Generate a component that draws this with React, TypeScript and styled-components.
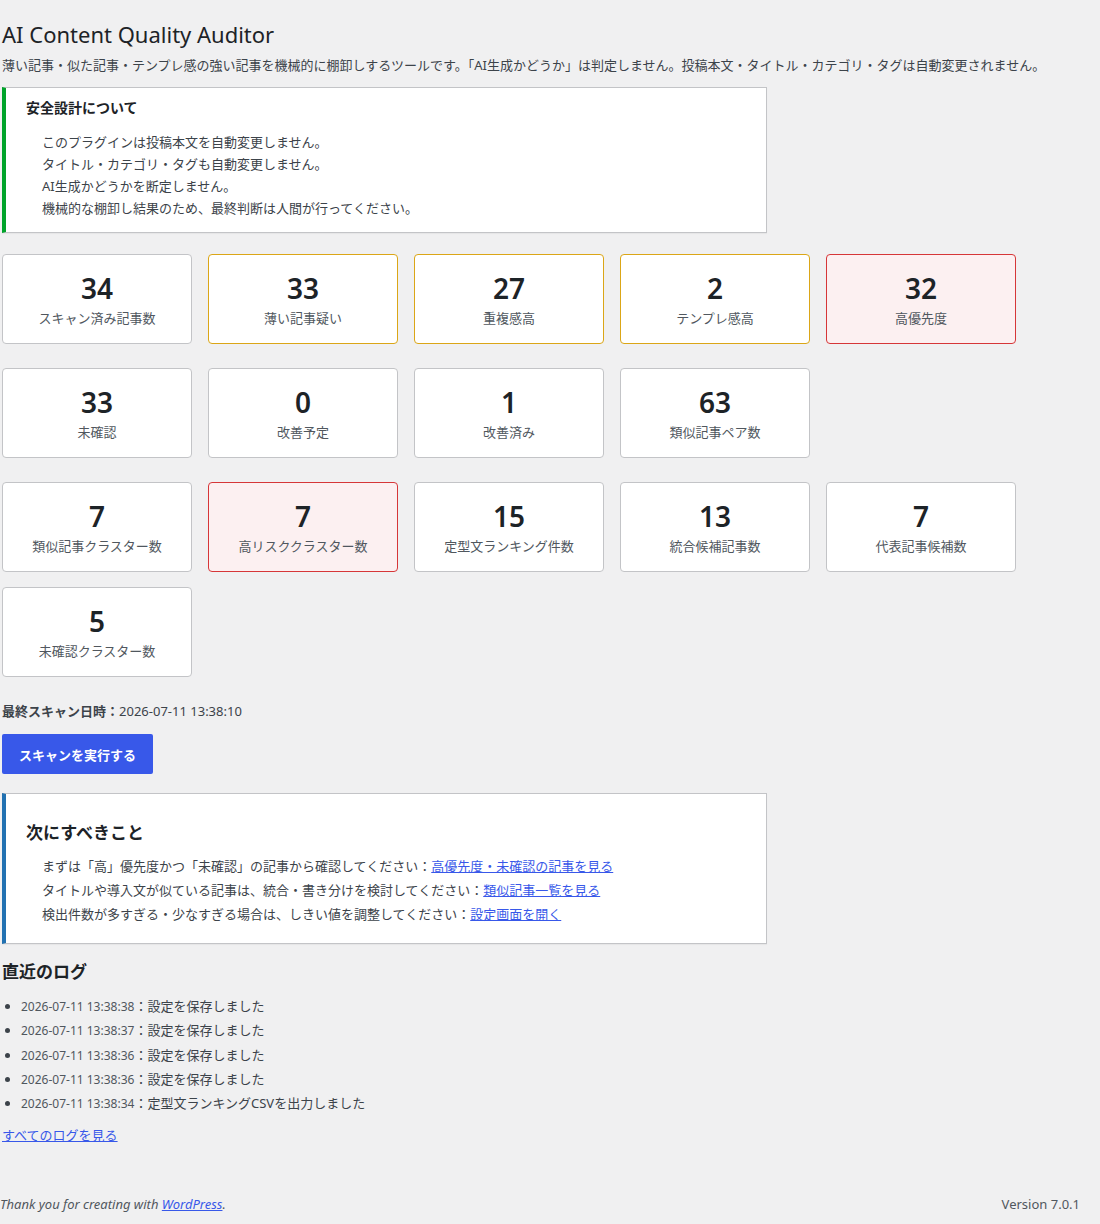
import React from "react";
import styled, { createGlobalStyle, css } from "styled-components";

const GlobalStyle = createGlobalStyle`
  html, body {
    margin: 0;
    padding: 0;
    background: #f0f0f1;
  }
  body {
    font-family: "Noto Sans", "Noto Sans CJK JP", sans-serif;
    font-size: 13px;
    line-height: 1.4em;
    color: #3c434a;
  }
`;

const Page = styled.div`
  min-height: 1224px;
  display: flex;
  flex-direction: column;
`;

const Wrap = styled.div`
  margin: 10px 20px 0 2px;
`;

const Title = styled.h1`
  font-size: 22px;
  font-weight: 400;
  line-height: 30px;
  margin: 0;
  padding: 9px 0 4px;
  color: #1d2327;
`;

const Description = styled.p`
  margin: 2px 0 12px;
  font-size: 13px;
  line-height: 20px;
`;

const Notice = styled.div<{ $accent: string; $padTop: number; $padBottom: number }>`
  width: 765px;
  box-sizing: border-box;
  background: #fff;
  border: 1px solid #c3c4c7;
  border-left: 4px solid ${(p) => p.$accent};
  box-shadow: 0 1px 1px rgba(0, 0, 0, 0.04);
  padding: ${(p) => p.$padTop}px 20px ${(p) => p.$padBottom}px;
`;

const NoticeHeading = styled.h3`
  margin: 0;
  font-size: 14px;
  line-height: 20px;
  font-weight: 700;
  color: #1d2327;
`;

const NextHeading = styled.h2`
  margin: 0;
  font-size: 17px;
  line-height: 24px;
  font-weight: 700;
  color: #1d2327;
`;

const PlainList = styled.ul<{ $gap: number; $lh: number }>`
  list-style: none;
  margin: ${(p) => p.$gap}px 0 0 16px;
  padding: 0;
  li {
    margin: 0;
    height: ${(p) => p.$lh}px;
    line-height: ${(p) => p.$lh}px;
    font-size: 13px;
  }
`;

const Link = styled.a`
  color: #3858e9;
  text-decoration: underline;
`;

const CardGroup = styled.div<{ $top: number }>`
  display: flex;
  flex-wrap: wrap;
  column-gap: 16px;
  row-gap: 15px;
  margin-top: ${(p) => p.$top}px;
  width: 1030px;
`;

type Tone = "normal" | "warn" | "danger";

const Card = styled.div<{ $tone: Tone }>`
  width: 190px;
  height: 90px;
  box-sizing: border-box;
  background: #fff;
  border: 1px solid #c3c4c7;
  border-radius: 4px;
  padding: 15px 8px;
  display: flex;
  flex-direction: column;
  align-items: center;
  text-align: center;
  ${(p) =>
    p.$tone === "warn" &&
    css`
      border-color: #dba617;
    `}
  ${(p) =>
    p.$tone === "danger" &&
    css`
      border-color: #d63638;
      background: #fcf0f1;
    `}
`;

const CardNumber = styled.div`
  font-size: 28px;
  line-height: 36px;
  font-weight: 600;
  color: #1d2327;
`;

const CardLabel = styled.div`
  margin-top: 2px;
  font-size: 13px;
  line-height: 20px;
  color: #50575e;
`;

const ScanInfo = styled.p`
  margin: 24px 0 0;
  font-size: 13px;
  line-height: 20px;
  strong {
    font-weight: 700;
    color: #3c434a;
  }
`;

const PrimaryButton = styled.button`
  display: block;
  margin-top: 13px;
  height: 40px;
  padding: 0 17px;
  border: none;
  border-radius: 2px;
  background: #3858e9;
  color: #fff;
  font-family: inherit;
  font-size: 13px;
  font-weight: 700;
  cursor: pointer;
`;

const Spacer = styled.div<{ $h: number }>`
  height: ${(p) => p.$h}px;
`;

const LogHeading = styled.h2`
  margin: 16px 0 0;
  font-size: 17px;
  line-height: 24px;
  font-weight: 700;
  color: #1d2327;
`;

const LogList = styled.ul`
  margin: 10px 0 0;
  padding-left: 19px;
  list-style: disc;
  li {
    height: 24.25px;
    line-height: 24px;
    font-size: 13px;
  }
`;

const LogTime = styled.span`
  color: #50575e;
  font-size: 12px;
`;

const AllLogs = styled.p`
  margin: 10px 0 0;
  line-height: 20px;
`;

const Footer = styled.footer`
  margin-top: auto;
  display: flex;
  justify-content: space-between;
  padding: 0 20px 10px 0;
  font-size: 13px;
  line-height: 20px;
  color: #50575e;
`;

const FooterThanks = styled.span`
  font-style: italic;
`;

type CardData = { n: number; label: string; tone: Tone };

const group1: CardData[] = [
  { n: 34, label: "スキャン済み記事数", tone: "normal" },
  { n: 33, label: "薄い記事疑い", tone: "warn" },
  { n: 27, label: "重複感高", tone: "warn" },
  { n: 2, label: "テンプレ感高", tone: "warn" },
  { n: 32, label: "高優先度", tone: "danger" },
];

const group2: CardData[] = [
  { n: 33, label: "未確認", tone: "normal" },
  { n: 0, label: "改善予定", tone: "normal" },
  { n: 1, label: "改善済み", tone: "normal" },
  { n: 63, label: "類似記事ペア数", tone: "normal" },
];

const group3: CardData[] = [
  { n: 7, label: "類似記事クラスター数", tone: "normal" },
  { n: 7, label: "高リスククラスター数", tone: "danger" },
  { n: 15, label: "定型文ランキング件数", tone: "normal" },
  { n: 13, label: "統合候補記事数", tone: "normal" },
  { n: 7, label: "代表記事候補数", tone: "normal" },
  { n: 5, label: "未確認クラスター数", tone: "normal" },
];

const logs = [
  { t: "2026-07-11 13:38:38", m: "設定を保存しました" },
  { t: "2026-07-11 13:38:37", m: "設定を保存しました" },
  { t: "2026-07-11 13:38:36", m: "設定を保存しました" },
  { t: "2026-07-11 13:38:36", m: "設定を保存しました" },
  { t: "2026-07-11 13:38:34", m: "定型文ランキングCSVを出力しました" },
];

const Cards = ({ items, top }: { items: CardData[]; top: number }) => (
  <CardGroup $top={top}>
    {items.map((c, i) => (
      <Card key={i} $tone={c.tone}>
        <CardNumber>{c.n}</CardNumber>
        <CardLabel>{c.label}</CardLabel>
      </Card>
    ))}
  </CardGroup>
);

export default function App() {
  return (
    <Page>
      <GlobalStyle />
      <Wrap>
        <Title>AI Content Quality Auditor</Title>
        <Description>
          薄い記事・似た記事・テンプレ感の強い記事を機械的に棚卸しするツールです。「AI生成かどうか」は判定しません。投稿本文・タイトル・カテゴリ・タグは自動変更されません。
        </Description>
        <Notice $accent="#00a32a" $padTop={10} $padBottom={13}>
          <NoticeHeading>安全設計について</NoticeHeading>
          <PlainList $gap={13} $lh={22}>
            <li>このプラグインは投稿本文を自動変更しません。</li>
            <li>タイトル・カテゴリ・タグも自動変更しません。</li>
            <li>AI生成かどうかを断定しません。</li>
            <li>機械的な棚卸し結果のため、最終判断は人間が行ってください。</li>
          </PlainList>
        </Notice>

        <Cards items={group1} top={21} />
        <Cards items={group2} top={24} />
        <Cards items={group3} top={24} />

        <ScanInfo>
          <strong>最終スキャン日時：</strong>2026-07-11 13:38:10
        </ScanInfo>
        <PrimaryButton type="button">スキャンを実行する</PrimaryButton>
        <Spacer $h={19} />

        <Notice $accent="#2271b1" $padTop={27} $padBottom={17}>
          <NextHeading>次にすべきこと</NextHeading>
          <PlainList $gap={9} $lh={24}>
            <li>
              まずは「高」優先度かつ「未確認」の記事から確認してください：
              <Link href="#">高優先度・未確認の記事を見る</Link>
            </li>
            <li>
              タイトルや導入文が似ている記事は、統合・書き分けを検討してください：
              <Link href="#">類似記事一覧を見る</Link>
            </li>
            <li>
              検出件数が多すぎる・少なすぎる場合は、しきい値を調整してください：
              <Link href="#">設定画面を開く</Link>
            </li>
          </PlainList>
        </Notice>

        <LogHeading>直近のログ</LogHeading>
        <LogList>
          {logs.map((l, i) => (
            <li key={i}>
              <LogTime>{l.t}</LogTime>：{l.m}
            </li>
          ))}
        </LogList>
        <AllLogs>
          <Link href="#">すべてのログを見る</Link>
        </AllLogs>
      </Wrap>
      <Footer>
        <FooterThanks>
          Thank you for creating with <Link href="#">WordPress</Link>.
        </FooterThanks>
        <span>Version 7.0.1</span>
      </Footer>
    </Page>
  );
}
